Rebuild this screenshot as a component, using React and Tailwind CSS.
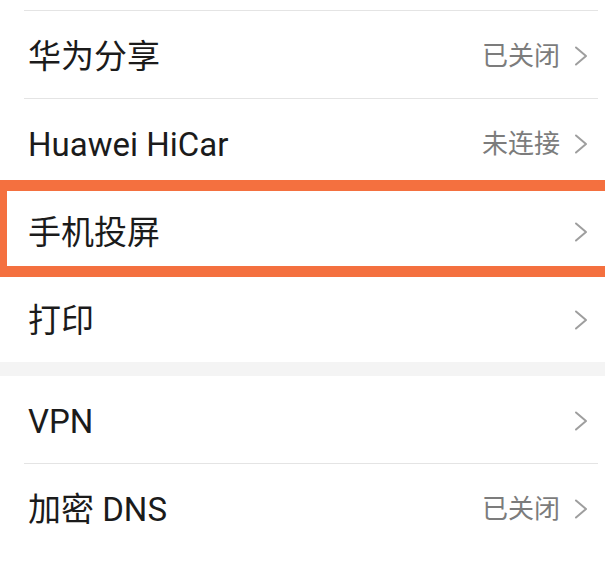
import React from 'react';

const FONT = { fontFamily: 'Roboto, "Noto Sans CJK SC", sans-serif' };

function Chevron() {
  return (
    <svg width="14" height="20" viewBox="0 0 14 20" className="shrink-0">
      <path d="M2 1.5 L12 10 L2 18.5" fill="none" stroke="#9e9e9e" strokeWidth="2" strokeLinejoin="round" strokeLinecap="round" />
    </svg>
  );
}

function Row({ label, value }) {
  return (
    <div className="flex items-center h-[87px] pt-[3px] pl-[28px] pr-[17px]">
      <span className="text-[33px] text-[#1b1b1b] leading-none">{label}</span>
      <div className="ml-auto flex items-center gap-[14px]">
        {value && <span className="text-[26px] text-[#7c7c7c] leading-none">{value}</span>}
        <Chevron />
      </div>
    </div>
  );
}

const Divider = () => <div className="h-px bg-[#e4e4e4] ml-[24px] mr-[7px]" />;

export default function App() {
  return (
    <div className="relative w-[605px] h-[583px] overflow-hidden bg-white" style={FONT}>
      <div className="h-[10px]" />
      <Divider />
      <Row label="华为分享" value="已关闭" />
      <Divider />
      <Row label="Huawei HiCar" value="未连接" />
      <Divider />
      <Row label="手机投屏" />
      <Divider />
      <Row label="打印" />
      <div className="h-[14px] bg-[#f4f4f4]" />
      <Row label="VPN" />
      <Divider />
      <Row label="加密 DNS" value="已关闭" />

      {/* highlight frame */}
      <div className="absolute left-0 top-[180px] w-[630px] h-[97px] border-[#f4703f] border-t-[11px] border-b-[11px] border-l-[7px]" />
    </div>
  );
}
